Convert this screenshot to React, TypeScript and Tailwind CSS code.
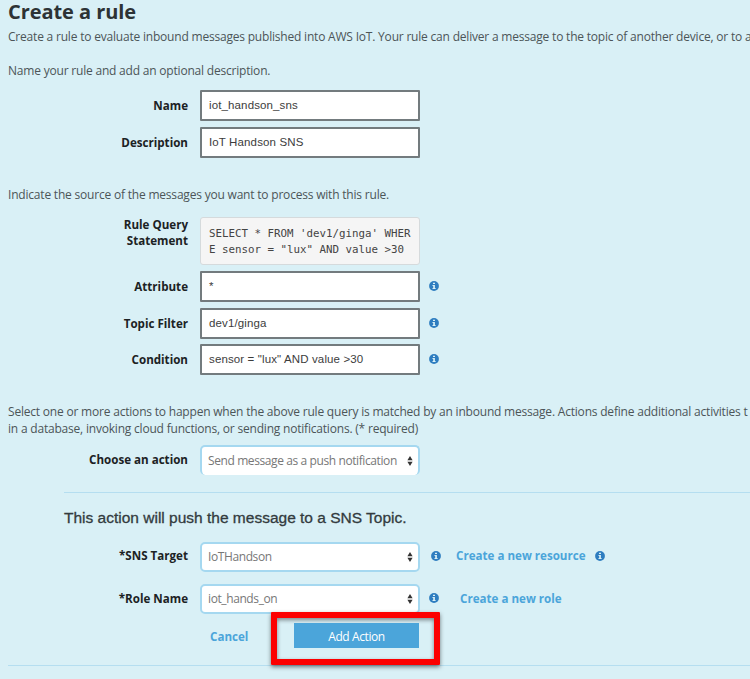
import type { ReactNode } from "react";

const sans = "font-['Open_Sans','Noto_Sans',sans-serif]";
const helv = "font-['Liberation_Sans',Arial,sans-serif]";

function Info() {
  return (
    <svg viewBox="0 0 10 10" className="block size-[10px] shrink-0">
      <circle cx="5" cy="5" r="4.9" fill="#2e7dc0" />
      <path d="M4 1.7h2v1.4H4zM3.5 4h2.4v3.1h.7v1H3.5v-1h.7V5h-.7z" fill="#d9f0f6" />
    </svg>
  );
}

function Arrows() {
  return (
    <svg viewBox="0 0 6 10" className="mr-[5px] block h-[10px] w-[6px] shrink-0">
      <path d="M3 0l2.6 4.2H.4zM3 10L.4 5.8h5.2z" fill="#333" />
    </svg>
  );
}

function Row({ label, labelClass = "", className = "", children }: { label: ReactNode; labelClass?: string; className?: string; children: ReactNode }) {
  return (
    <div className={`flex items-center ${className}`}>
      <div className={`w-[188px] shrink-0 text-right text-[11.6px] leading-[16px] font-bold text-[#1c2224] ${labelClass}`}>{label}</div>
      <div className="ml-[12px] flex items-center">{children}</div>
    </div>
  );
}

function Field({ children }: { children: string }) {
  return (
    <div className={`flex h-[31px] w-[220px] items-center rounded-[1px] border-2 border-[#737b7e] bg-white pl-[7px] text-[11.5px] tracking-[0.13px] text-[#3c3c3c] ${helv}`}>
      <span>{children}</span>
    </div>
  );
}

function Select({ children, className = "" }: { children: string; className?: string }) {
  return (
    <div className={`flex h-[30px] w-[220px] items-center justify-between rounded-[5px] border-2 border-[#a5d8f0] bg-white pl-[6px] text-[12px] tracking-[-0.4px] text-[#777] ${className}`}>
      <span>{children}</span>
      <Arrows />
    </div>
  );
}

export default function App() {
  return (
    <div className={`flex h-[679px] w-[750px] flex-col overflow-hidden bg-[#d9f0f6] whitespace-nowrap text-[#4c5558] ${sans}`}>
      <h1 className="h-[28px] pl-[8px] text-[20px] leading-[23px] font-bold tracking-[-0.06px] text-[#2d3335]">Create a rule</h1>
      <p className="h-[34px] pl-[8px] text-[12px] leading-[18px] tracking-[-0.2px]">Create a rule to evaluate inbound messages published into AWS IoT. Your rule can deliver a message to the topic of another device, or to a</p>
      <p className="h-[28px] pl-[8px] text-[12px] leading-[18px] tracking-[-0.2px]">Name your rule and add an optional description.</p>
      <Row label="Name" className="mb-[6px] h-[31px]"><Field>iot_handson_sns</Field></Row>
      <Row label="Description" className="h-[31px]"><Field>IoT Handson SNS</Field></Row>
      <p className="mt-[28px] h-[31px] pl-[8px] text-[12px] leading-[18px] tracking-[-0.2px]">Indicate the source of the messages you want to process with this rule.</p>
      <Row label={<>Rule Query<br />Statement</>} labelClass="self-start" className="mb-[6px] h-[48px]">
        <pre className="h-[48px] w-[220px] rounded-[3px] border border-[#d5dadc] bg-[#f5f5f5] pt-[8px] pl-[8px] font-['DejaVu_Sans_Mono',monospace] text-[10.8px] leading-[15.5px] text-[#444]">{"SELECT * FROM 'dev1/ginga' WHER\nE sensor = \"lux\" AND value >30"}</pre>
      </Row>
      <Row label="Attribute" className="mb-[6px] h-[31px]"><Field>*</Field><div className="ml-[9px] pb-[1px]"><Info /></div></Row>
      <Row label="Topic Filter" className="mb-[5px] h-[31px]"><Field>dev1/ginga</Field><div className="ml-[9px] pb-[2px]"><Info /></div></Row>
      <Row label="Condition" className="h-[31px]"><Field>{'sensor = "lux" AND value >30'}</Field><div className="ml-[9px] pb-[2px]"><Info /></div></Row>
      <div className="mt-[28px] h-[42px] pl-[8px] text-[12px] leading-[17px] tracking-[-0.2px]">
        <p>Select one or more actions to happen when the above rule query is matched by an inbound message. Actions define additional activities t</p>
        <p>in a database, invoking cloud functions, or sending notifications. (* required)</p>
      </div>
      <Row label="Choose an action" className="h-[30px]"><Select className="border-b-0">Send message as a push notification</Select></Row>
      <div className="mt-[17px] ml-[64px] border-t border-[#b5def0]" />
      <h2 className={`mt-[14px] h-[35px] pl-[64px] text-[15.5px] leading-[22px] text-[#333b3e] [-webkit-text-stroke:0.3px_#333b3e] ${helv}`}>This action will push the message to a SNS Topic.</h2>
      <Row label="*SNS Target" className="h-[30px]" labelClass="pb-[3px]">
        <Select>IoTHandson</Select>
        <div className="ml-[11px] pb-[2px]"><Info /></div>
        <span className="ml-[15px] w-[139px] pb-[2px] text-[11.6px] font-bold text-[#4ba5da]">Create a new resource</span>
        <div className="pb-[2px]"><Info /></div>
      </Row>
      <Row label="*Role Name" className="mt-[12px] h-[30px]">
        <Select>iot_hands_on</Select>
        <div className="ml-[9px] pb-[2px]"><Info /></div>
        <span className="ml-[21px] pb-[1px] text-[11.6px] font-bold text-[#4ba5da]">Create a new role</span>
      </Row>
      <div className="relative z-10 mt-[-2px] h-[53px] pl-[210px]">
        <div className="flex">
          <span className="mt-[16px] w-[61px] text-[11.6px] leading-[18px] font-bold text-[#4ba5da]">Cancel</span>
          <div className="flex h-[53px] w-[169px] rounded-[1px] border-6 border-[#fc0000] pt-[5px] pl-[17px] shadow-[0_2px_4px_rgba(0,0,0,0.5),inset_0_2px_4px_rgba(0,0,0,0.45)]">
            <button className="h-[25px] w-[125px] bg-[#4ba5da] pt-[2px] text-[12px] font-medium tracking-[-0.4px] text-white">Add Action</button>
          </div>
        </div>
      </div>
      <div className="ml-[8px] border-t border-[#b5def0]" />
    </div>
  );
}
